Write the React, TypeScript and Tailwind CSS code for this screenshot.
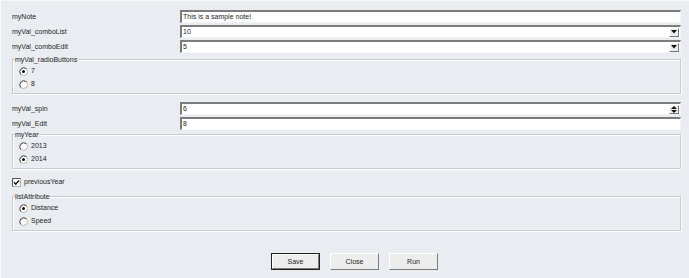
import React from "react";

const sunken =
  "bg-white border-t-2 border-l-2 border-b border-r border-t-[#7c7c7c] border-l-[#7c7c7c] border-b-[#f4f4f4] border-r-[#f4f4f4]";

function Radio({ checked, label }: { checked?: boolean; label: string }) {
  return (
    <div className="flex items-center h-[10px] gap-[3px]">
      <svg width="9" height="9" viewBox="0 0 9 9">
        <circle cx="4.5" cy="4.5" r="4" fill="#fff" stroke="#b4b4b4" />
        <path d="M1.7 7.3 A4 4 0 0 1 7.3 1.7" fill="none" stroke="#555" />
        {checked && <circle cx="4.5" cy="4.5" r="1.5" fill="#111" />}
      </svg>
      <span>{label}</span>
    </div>
  );
}

function Group({ title, children }: { title: string; children: React.ReactNode }) {
  return (
    <div className="relative h-[35px] border border-[#c6cacf] shadow-[1px_1px_0_#fff,inset_1px_1px_0_#fff] pl-[6px] pt-[6px] flex flex-col gap-[3px]">
      <span className="absolute -top-[5px] left-[2px] leading-[9px] bg-[#e9ecf0]">{title}</span>
      {children}
    </div>
  );
}

function DropButton({ spin }: { spin?: boolean }) {
  return (
    <div className="w-[10px] h-[9px] mr-[1px] bg-[#eeeeee] border-t border-l border-b border-r border-t-white border-l-white border-b-[#777] border-r-[#777] flex items-center justify-center">
      {spin ? (
        <svg width="6" height="7" viewBox="0 0 6 7">
          <path d="M3 0 L6 3 L0 3 Z" fill="#111" />
          <path d="M0 4 L6 4 L3 7 Z" fill="#111" />
        </svg>
      ) : (
        <svg width="6" height="4" viewBox="0 0 6 4">
          <path d="M0 0 L6 0 L3 3.5 Z" fill="#111" />
        </svg>
      )}
    </div>
  );
}

function Row({
  label,
  value,
  kind,
  className = "",
}: {
  label: string;
  value: string;
  kind?: "combo" | "spin";
  className?: string;
}) {
  return (
    <div className={`flex items-center h-[13px] ${className}`}>
      <span className="w-[168px]">{label}</span>
      <div className={`flex-1 h-[13px] flex items-center pl-[1px] ${sunken}`}>
        <span className="flex-1">{value}</span>
        {kind && <DropButton spin={kind === "spin"} />}
      </div>
    </div>
  );
}

function Button({ label, isDefault }: { label: string; isDefault?: boolean }) {
  return (
    <div className={`w-[49px] h-[17px] ${isDefault ? "border border-[#222]" : ""}`}>
      <div className="w-full h-full bg-[#ededed] border-t border-l border-b border-r border-t-white border-l-white border-b-[#7a7a7a] border-r-[#7a7a7a] flex items-center justify-center">
        {label}
      </div>
    </div>
  );
}

export default function App() {
  return (
    <div className="w-[689px] h-[278px] bg-[#e9ecf0] border-t border-l border-[#f8f9fb] pl-[11px] pr-[8px] pt-[9px] flex flex-col font-['Liberation_Sans',Arial,sans-serif] text-[7px] leading-[10px] text-[#1e1e1e]">
      <Row label="myNote" value="This is a sample note!" />
      <Row label="myVal_comboList" value="10" kind="combo" className="mt-[2px]" />
      <Row label="myVal_comboEdit" value="5" kind="combo" className="mt-[2px]" />

      <div className="mt-[6px]">
        <Group title="myVal_radioButtons">
          <Radio checked label="7" />
          <Radio label="8" />
        </Group>
      </div>

      <Row label="myVal_spin" value="6" kind="spin" className="mt-[8px]" />
      <Row label="myVal_Edit" value="8" className="mt-[2px]" />

      <div className="mt-[4px]">
        <Group title="myYear">
          <Radio label="2013" />
          <Radio checked label="2014" />
        </Group>
      </div>

      <div className="mt-[8px] flex items-center h-[10px] gap-[3px]">
        <svg width="9" height="9" viewBox="0 0 9 9">
          <rect x="0.5" y="0.5" width="8" height="8" fill="#fff" stroke="#b4b4b4" />
          <path d="M0.5 8.5 V0.5 H8.5" fill="none" stroke="#555" />
          <path d="M2 4.3 L3.8 6.2 L7 2.4" fill="none" stroke="#111" strokeWidth="1.4" />
        </svg>
        <span>previousYear</span>
      </div>

      <div className="mt-[9px]">
        <Group title="listAttribute">
          <Radio checked label="Distance" />
          <Radio label="Speed" />
        </Group>
      </div>

      <div className="mt-[22px] ml-[259px] flex gap-[10px]">
        <Button label="Save" isDefault />
        <Button label="Close" />
        <Button label="Run" />
      </div>
    </div>
  );
}
